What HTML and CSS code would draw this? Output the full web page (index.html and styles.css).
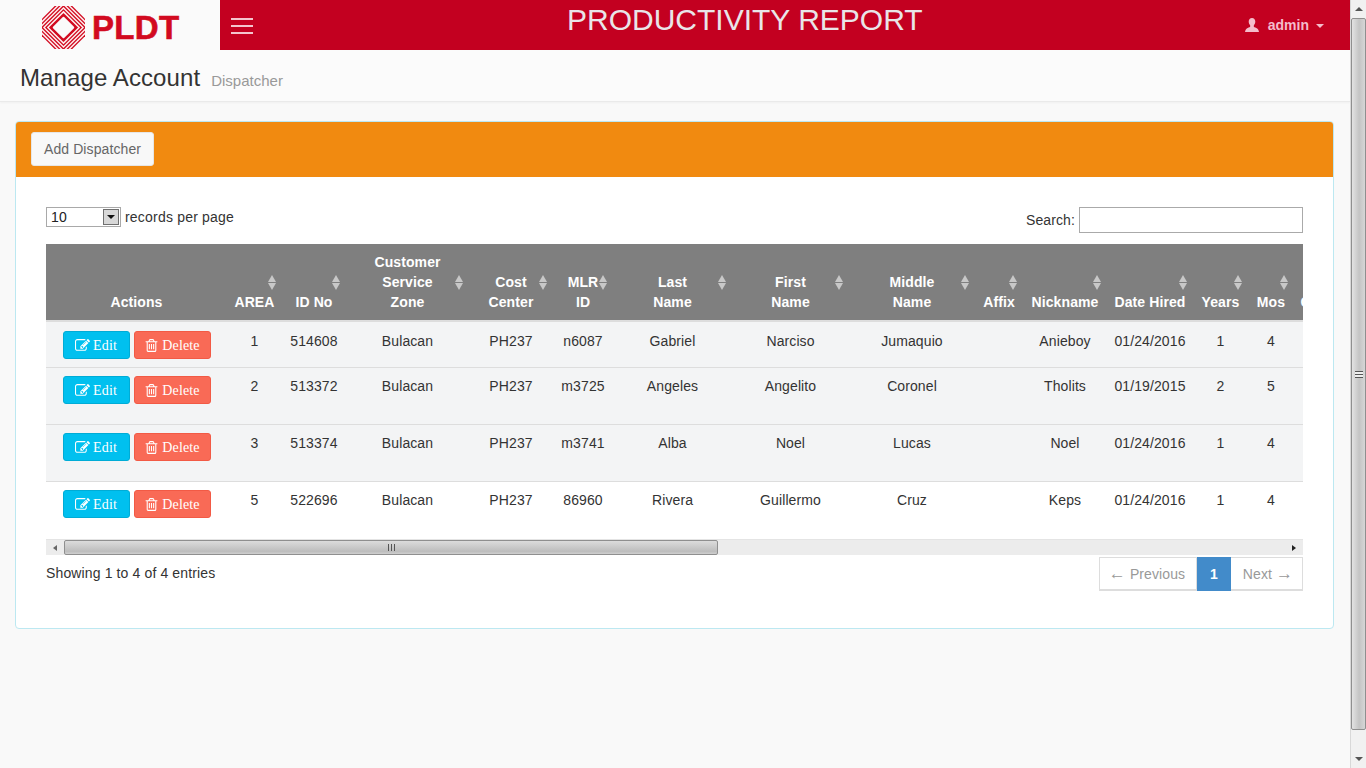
FILE: index.html
```html
<!DOCTYPE html>
<html lang="en">
<head>
    <meta charset="UTF-8">
    <meta name="viewport" content="width=device-width, initial-scale=1.0">
    <title>Manage Account</title>
    <link rel="stylesheet" href="styles.css">
</head>
<body>
    <svg class="sprite" aria-hidden="true">
        <symbol id="i-edit" viewBox="0 0 1792 1792"><path d="M888 1184l116-116-152-152-116 116v56h96v96h56zm440-720q-16-16-33 1l-350 350q-17 17-1 33t33-1l350-350q17-17 1-33zm80 594v190q0 119-84.5 203.5t-203.5 84.5h-832q-119 0-203.5-84.5t-84.5-203.5v-832q0-119 84.5-203.5t203.5-84.5h832q63 0 117 25 15 7 18 23 3 17-9 29l-49 49q-14 14-32 8-23-6-45-6h-832q-66 0-113 47t-47 113v832q0 66 47 113t113 47h832q66 0 113-47t47-113v-126q0-13 9-22l64-64q15-15 35-7t20 29zm-96-738l288 288-672 672h-288v-288zm444 132l-92 92-288-288 92-92q28-28 68-28t68 28l152 152q28 28 28 68t-28 68z"/></symbol>
        <symbol id="i-trash" viewBox="0 0 1792 1792"><path d="M704 736v576q0 14-9 23t-23 9h-64q-14 0-23-9t-9-23v-576q0-14 9-23t23-9h64q14 0 23 9t9 23zm256 0v576q0 14-9 23t-23 9h-64q-14 0-23-9t-9-23v-576q0-14 9-23t23-9h64q14 0 23 9t9 23zm256 0v576q0 14-9 23t-23 9h-64q-14 0-23-9t-9-23v-576q0-14 9-23t23-9h64q14 0 23 9t9 23zm128 724v-948h-896v948q0 22 7 40.5t14.5 27 10.5 8.5h832q3 0 10.5-8.5t14.5-27 7-40.5zm-672-1076h448l-48-117q-7-9-17-11h-317q-10 2-17 11zm928 32v64q0 14-9 23t-23 9h-96v948q0 83-47 143.5t-113 60.5h-832q-66 0-113-58.5t-47-141.5v-952h-96q-14 0-23-9t-9-23v-64q0-14 9-23t23-9h309l70-167q15-37 54-63t79-26h320q40 0 79 26t54 63l70 167h309q14 0 23 9t9 23z"/></symbol>
    </svg>

    <div class="shell">
        <div class="page">
            <header class="navbar">
                <a class="brand">
                    <svg class="brand-mark" viewBox="0 0 44 44" aria-hidden="true">
                        <polygon class="mark-fill" points="13,0 31,0 44,13 44,31 31,44 13,44 0,31 0,13"/>
                        <polygon class="mark-line" points="22,-6 50,22 22,50 -6,22"/>
                        <polygon class="mark-line" points="22,-2 46,22 22,46 -2,22"/>
                        <polygon class="mark-line" points="22,2 42,22 22,42 2,22"/>
                        <polygon class="mark-line" points="22,6 38,22 22,38 6,22"/>
                        <polygon class="mark-hole" points="22,12 32,22 22,32 12,22"/>
                    </svg>
                    <span class="brand-name">PLDT</span>
                </a>
                <button class="nav-toggle" type="button" aria-label="Menu">
                    <span></span><span></span><span></span>
                </button>
                <div class="nav-title">PRODUCTIVITY REPORT</div>
                <div class="nav-user">
                    <svg class="user-icon" viewBox="0 0 14 14" aria-hidden="true"><path d="M7 0c2 0 3.300 1.500 3.300 3.600 0 1.600-.7 3-1.500 3.800v1.200c0 .6 1.200.9 2.500 1.500 1.300.5 2.200 1.200 2.700 3.900H0c.5-2.700 1.400-3.400 2.700-3.900 1.300-.6 2.500-.9 2.500-1.500V7.400c-.8-.8-1.500-2.200-1.500-3.800C3.700 1.500 5 0 7 0z"/></svg>
                    <span>admin</span>
                    <i class="caret"></i>
                </div>
            </header>

            <div class="page-head">
                <h1>Manage Account</h1>
                <small>Dispatcher</small>
            </div>

            <main class="content">
                <section class="panel">
                    <div class="panel-heading">
                        <button class="btn-add" type="button">Add Dispatcher</button>
                    </div>
                    <div class="panel-body">
                        <div class="table-top">
                            <div class="length">
                                <div class="select-box">
                                    <span class="select-value">10</span>
                                    <span class="select-arrow"></span>
                                </div>
                                <span class="length-label">records per page</span>
                            </div>
                            <div class="search">
                                <label for="search">Search:</label>
                                <input type="text" id="search">
                            </div>
                        </div>

                        <div class="table-wrap">
                            <table class="data-table">
                                <colgroup>
                                    <col class="col-actions"><col class="col-area"><col class="col-id">
                                    <col class="col-zone"><col class="col-cost"><col class="col-mlr">
                                    <col class="col-last"><col class="col-first"><col class="col-middle">
                                    <col class="col-affix"><col class="col-nick"><col class="col-date">
                                    <col class="col-years"><col class="col-mos"><col class="col-extra">
                                </colgroup>
                                <thead>
                                    <tr>
                                        <th>Actions</th>
                                        <th>AREA<span class="sort"></span></th>
                                        <th>ID No<span class="sort"></span></th>
                                        <th>Customer<br>Service<br>Zone<span class="sort"></span></th>
                                        <th>Cost<br>Center<span class="sort"></span></th>
                                        <th>MLR<br>ID<span class="sort"></span></th>
                                        <th>Last<br>Name<span class="sort"></span></th>
                                        <th>First<br>Name<span class="sort"></span></th>
                                        <th>Middle<br>Name<span class="sort"></span></th>
                                        <th>Affix<span class="sort"></span></th>
                                        <th>Nickname<span class="sort"></span></th>
                                        <th>Date Hired<span class="sort"></span></th>
                                        <th>Years<span class="sort"></span></th>
                                        <th>Mos<span class="sort"></span></th>
                                        <th>Contact</th>
                                    </tr>
                                </thead>
                                <tbody>
                                    <tr class="row-grey row-first">
                                        <td><div class="actions">
                                            <a class="btn btn-edit"><svg class="ico"><use href="#i-edit"/></svg> Edit</a>
                                            <a class="btn btn-delete"><svg class="ico"><use href="#i-trash"/></svg> Delete</a>
                                        </div></td>
                                        <td>1</td><td>514608</td><td>Bulacan</td><td>PH237</td><td>n6087</td>
                                        <td>Gabriel</td><td>Narciso</td><td>Jumaquio</td><td></td><td>Anieboy</td>
                                        <td>01/24/2016</td><td>1</td><td>4</td><td></td>
                                    </tr>
                                    <tr class="row-grey">
                                        <td><div class="actions actions-tall">
                                            <a class="btn btn-edit"><svg class="ico"><use href="#i-edit"/></svg> Edit</a>
                                            <a class="btn btn-delete"><svg class="ico"><use href="#i-trash"/></svg> Delete</a>
                                        </div></td>
                                        <td>2</td><td>513372</td><td>Bulacan</td><td>PH237</td><td>m3725</td>
                                        <td>Angeles</td><td>Angelito</td><td>Coronel</td><td></td><td>Tholits</td>
                                        <td>01/19/2015</td><td>2</td><td>5</td><td></td>
                                    </tr>
                                    <tr class="row-grey">
                                        <td><div class="actions actions-tall">
                                            <a class="btn btn-edit"><svg class="ico"><use href="#i-edit"/></svg> Edit</a>
                                            <a class="btn btn-delete"><svg class="ico"><use href="#i-trash"/></svg> Delete</a>
                                        </div></td>
                                        <td>3</td><td>513374</td><td>Bulacan</td><td>PH237</td><td>m3741</td>
                                        <td>Alba</td><td>Noel</td><td>Lucas</td><td></td><td>Noel</td>
                                        <td>01/24/2016</td><td>1</td><td>4</td><td></td>
                                    </tr>
                                    <tr class="row-last">
                                        <td><div class="actions actions-tall">
                                            <a class="btn btn-edit"><svg class="ico"><use href="#i-edit"/></svg> Edit</a>
                                            <a class="btn btn-delete"><svg class="ico"><use href="#i-trash"/></svg> Delete</a>
                                        </div></td>
                                        <td>5</td><td>522696</td><td>Bulacan</td><td>PH237</td><td>86960</td>
                                        <td>Rivera</td><td>Guillermo</td><td>Cruz</td><td></td><td>Keps</td>
                                        <td>01/24/2016</td><td>1</td><td>4</td><td></td>
                                    </tr>
                                </tbody>
                            </table>
                        </div>

                        <div class="hscroll">
                            <span class="hscroll-btn"><i class="tri tri-left"></i></span>
                            <div class="hscroll-thumb"><span class="hscroll-grip"></span></div>
                            <span class="hscroll-fill"></span>
                            <span class="hscroll-btn"><i class="tri tri-right"></i></span>
                        </div>

                        <div class="table-bottom">
                            <div class="info">Showing 1 to 4 of 4 entries</div>
                            <ul class="pagination">
                                <li class="page-prev"><span class="arrow">←</span> Previous</li>
                                <li class="page-current">1</li>
                                <li class="page-next">Next <span class="arrow">→</span></li>
                            </ul>
                        </div>
                    </div>
                </section>
            </main>
        </div>

        <div class="vscroll">
            <span class="vscroll-btn"><i class="tri tri-up"></i></span>
            <div class="vscroll-thumb"><span class="vscroll-grip"></span></div>
            <span class="vscroll-fill"></span>
            <span class="vscroll-btn"><i class="tri tri-down"></i></span>
        </div>
    </div>
</body>
</html>
```

FILE: styles.css
```css
* {
    box-sizing: border-box;
}

html, body {
    margin: 0;
    padding: 0;
    height: 768px;
    overflow: hidden;
}

body {
    font-family: "Liberation Sans", Arial, sans-serif;
    font-size: 14px;
    line-height: 20px;
    letter-spacing: 0.1px;
    color: #333;
    background-color: #f9f9f9;
}

.sprite {
    display: none;
}

.shell {
    display: flex;
    height: 768px;
}

.page {
    width: 1350px;
    flex: none;
}

/* top bar */
.navbar {
    display: flex;
    align-items: flex-start;
    height: 50px;
    background-color: #c30020;
}

.brand {
    display: flex;
    align-items: center;
    width: 220px;
    height: 50px;
    padding: 0 0 0 42px;
    background-color: #fafafa;
}

.brand-mark {
    width: 43px;
    height: 43px;
    margin-top: 5px;
}

.mark-fill {
    fill: #d20a20;
}

.mark-line {
    fill: none;
    stroke: #fdeeee;
    stroke-width: 1.5;
}

.mark-hole {
    fill: #fafafa;
    stroke: #fafafa;
    stroke-width: 2;
    stroke-linejoin: round;
}

.brand-name {
    margin: 6px 0 0 7px;
    font-size: 33px;
    line-height: 40px;
    font-weight: bold;
    letter-spacing: 0.3px;
    color: #d20a20;
    -webkit-text-stroke: 0.6px #d20a20;
}

.nav-toggle {
    display: flex;
    flex-direction: column;
    gap: 5px;
    width: 46px;
    padding: 18px 0 0 11px;
    border: none;
    background: none;
}

.nav-toggle span {
    display: block;
    width: 22px;
    height: 2px;
    background-color: #f4c4cd;
}

.nav-title {
    margin: 0 0 0 301px;
    font-size: 30px;
    line-height: 40px;
    letter-spacing: 0;
    white-space: nowrap;
    color: #e9e5e8;
}

.nav-user {
    display: flex;
    align-items: center;
    margin-left: auto;
    padding: 15px 26px 0 0;
    font-weight: bold;
    letter-spacing: 0;
    color: #f4bccb;
}

.user-icon {
    width: 14px;
    height: 14px;
    margin-right: 9px;
    fill: #f4bccb;
}

.caret {
    width: 0;
    height: 0;
    margin: 2px 0 0 7px;
    border-top: 4px solid #f4bccb;
    border-left: 4px solid transparent;
    border-right: 4px solid transparent;
}

/* page title */
.page-head {
    display: flex;
    align-items: baseline;
    height: 52px;
    padding: 13px 20px 0;
    background-color: #fbfbfb;
    border-bottom: 1px solid #eaeaea;
    box-shadow: 0 1px 2px rgba(0, 0, 0, 0.04);
}

.page-head h1 {
    margin: 0;
    font-size: 24px;
    line-height: 30px;
    font-weight: normal;
    color: #333;
}

.page-head small {
    margin-left: 11px;
    font-size: 15px;
    letter-spacing: 0;
    color: #999;
}

.content {
    padding: 19px 16px 0 15px;
}

/* panel */
.panel {
    height: 508px;
    background: white;
    border: 1px solid #bce8f1;
    border-radius: 4px;
    overflow: hidden;
}

.panel-heading {
    height: 55px;
    padding: 10px 15px;
    background-color: #f18a10;
}

.btn-add {
    width: 123px;
    height: 34px;
    padding: 0;
    font-family: inherit;
    font-size: 14px;
    letter-spacing: 0.1px;
    color: #666;
    background-color: #f8f8f8;
    border: 1px solid #e6e6e6;
    border-radius: 3px;
}

.panel-body {
    padding: 30px 30px 0;
}

.table-top {
    display: flex;
    justify-content: space-between;
    height: 37px;
}

.length {
    display: flex;
    align-items: flex-start;
    gap: 4px;
}

.length-label {
    letter-spacing: 0.2px;
}

.select-box {
    display: flex;
    justify-content: space-between;
    width: 75px;
    height: 20px;
    padding: 1px;
    border: 1px solid #a9a9a9;
}

.select-value {
    padding-left: 3px;
    line-height: 17px;
    color: #222;
}

.select-arrow {
    position: relative;
    width: 16px;
    height: 16px;
    background-color: #d8d8d8;
    border: 1px solid #707070;
}

.select-arrow::after {
    content: "";
    position: absolute;
    left: 3px;
    top: 5px;
    border-top: 4px solid #111;
    border-left: 4px solid transparent;
    border-right: 4px solid transparent;
}

.search {
    display: flex;
    align-items: center;
    gap: 4px;
    height: 26px;
}

.search input {
    width: 224px;
    height: 26px;
    border: 1px solid #aaa;
    background: white;
}

/* table */
.table-wrap {
    overflow: hidden;
}

.data-table {
    width: 1314px;
    table-layout: fixed;
    border-collapse: separate;
    border-spacing: 0;
}

.col-actions { width: 181px; }
.col-area { width: 55px; }
.col-id { width: 64px; }
.col-zone { width: 123px; }
.col-cost { width: 84px; }
.col-mlr { width: 60px; }
.col-last { width: 119px; }
.col-first { width: 117px; }
.col-middle { width: 126px; }
.col-affix { width: 48px; }
.col-nick { width: 84px; }
.col-date { width: 86px; }
.col-years { width: 55px; }
.col-mos { width: 46px; }
.col-extra { width: 66px; }

.data-table th {
    position: relative;
    height: 78px;
    padding: 8px 0;
    text-align: center;
    vertical-align: bottom;
    font-weight: bold;
    white-space: nowrap;
    color: white;
    background-color: #7f7f7f;
    border-bottom: 2px solid #ddd;
}

.sort {
    position: absolute;
    right: 6px;
    top: 31px;
    width: 8px;
    height: 15px;
}

.sort::before,
.sort::after {
    content: "";
    position: absolute;
    left: 0;
    border-left: 4px solid transparent;
    border-right: 4px solid transparent;
}

.sort::before {
    top: 0;
    border-bottom: 7px solid #c8c8c8;
}

.sort::after {
    bottom: 0;
    border-top: 7px solid #c8c8c8;
}

.data-table td {
    padding: 8px 0;
    text-align: center;
    vertical-align: top;
    white-space: nowrap;
    border-bottom: 1px solid #ddd;
}

.row-grey td {
    background-color: #f3f4f5;
}

.row-first td {
    padding-top: 9px;
}

.row-last td {
    border-bottom-color: transparent;
}

.actions {
    display: flex;
    justify-content: center;
    align-items: flex-start;
    gap: 4px;
    min-height: 28px;
}

.actions-tall {
    min-height: 40px;
}

.btn {
    display: flex;
    align-items: center;
    justify-content: center;
    gap: 3px;
    height: 28px;
    padding-top: 1px;
    font-family: "Liberation Serif", "Times New Roman", serif;
    font-size: 14px;
    letter-spacing: 0.15px;
    color: white;
    border-radius: 3px;
    border-style: solid;
    border-width: 1px;
}

.btn-edit {
    width: 67px;
    background-color: #00c0ef;
    border-color: #00acd6;
}

.btn-delete {
    width: 77px;
    background-color: #f96a56;
    border-color: #f25a45;
}

.ico {
    width: 15px;
    height: 15px;
    margin-top: -1px;
    fill: white;
}

/* horizontal scrollbar drawn under the table */
.hscroll {
    display: flex;
    height: 16px;
    background-color: #ececec;
    border-top: 1px solid #e4e4e4;
}

.hscroll-btn {
    display: flex;
    align-items: center;
    justify-content: center;
    flex: none;
    width: 18px;
    height: 15px;
}

.hscroll-thumb {
    display: flex;
    align-items: center;
    justify-content: center;
    width: 654px;
    height: 15px;
    background: linear-gradient(#dcdcdc, #bdbdbd 80%, #cfcfcf);
    border: 1px solid #8f8f8f;
    border-radius: 2px;
}

.hscroll-grip {
    width: 7px;
    height: 7px;
    background: repeating-linear-gradient(90deg, #555 0 1px, transparent 1px 3px);
}

.hscroll-fill {
    flex: 1;
}

.tri {
    display: block;
    width: 0;
    height: 0;
}

.tri-left {
    border-top: 3.5px solid transparent;
    border-bottom: 3.5px solid transparent;
    border-right: 4px solid #666;
}

.tri-right {
    border-top: 3.5px solid transparent;
    border-bottom: 3.5px solid transparent;
    border-left: 4px solid #222;
}

.tri-up {
    border-left: 4px solid transparent;
    border-right: 4px solid transparent;
    border-bottom: 4px solid #555;
}

.tri-down {
    border-left: 4px solid transparent;
    border-right: 4px solid transparent;
    border-top: 4px solid #555;
}

.table-bottom {
    display: flex;
    justify-content: space-between;
    padding-top: 2px;
}

.info {
    padding-top: 6px;
    letter-spacing: 0.13px;
}

.pagination {
    display: flex;
    margin: 0;
    padding: 0;
    list-style: none;
    color: #999;
}

.pagination li {
    height: 34px;
    line-height: 32px;
    text-align: center;
    white-space: nowrap;
    border: 1px solid #ddd;
    border-bottom-width: 2px;
}

.arrow {
    font-size: 17px;
    line-height: 1;
}

.page-prev {
    width: 98px;
    padding-right: 2px;
}

.page-current {
    width: 34px;
    font-weight: bold;
    color: white;
    background-color: #428bca;
    border-color: #428bca !important;
}

.page-next {
    width: 72px;
    padding-left: 3px;
    border-left: none !important;
}

/* window scrollbar */
.vscroll {
    display: flex;
    flex-direction: column;
    width: 16px;
    flex: none;
    background-color: #f1f1f1;
    border-left: 1px solid #d8d8d8;
}

.vscroll-btn {
    display: flex;
    align-items: center;
    justify-content: center;
    height: 18px;
    flex: none;
}

.vscroll-thumb {
    display: flex;
    align-items: center;
    justify-content: center;
    height: 712px;
    flex: none;
    background: linear-gradient(90deg, #e2e2e2, #c4c4c4 55%, #d6d6d6);
    border: 1px solid #8f8f8f;
    border-radius: 2px;
}

.vscroll-grip {
    width: 8px;
    height: 7px;
    background: repeating-linear-gradient(0deg, #555 0 1px, #eee 1px 3px);
}

.vscroll-fill {
    flex: 1;
}
```
